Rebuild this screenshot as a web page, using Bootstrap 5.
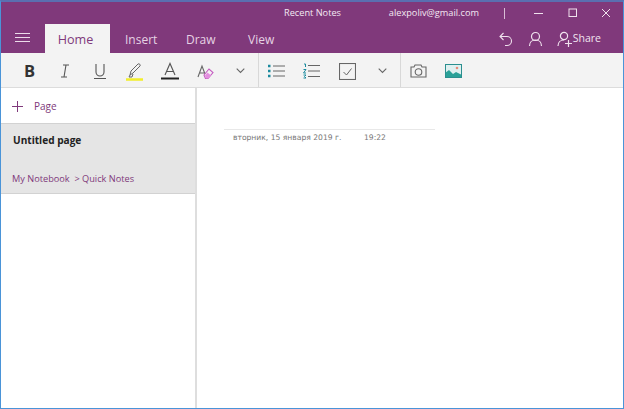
<!DOCTYPE html>
<html lang="en">
<head>
  <meta charset="UTF-8">
  <title>Recent Notes</title>
  <meta name="viewport" content="width=device-width, initial-scale=1">
  <link href="https://cdn.jsdelivr.net/npm/bootstrap@5.3.0/dist/css/bootstrap.min.css" rel="stylesheet">
  <style>
    html, body { height: 100%; overflow: hidden; }
    body { font-family: "Open Sans", "Noto Sans", sans-serif; background: #fff; }
    .app-window { width: 624px; height: 409px; border: 1px solid #4a94d8; border-top-color: #5a6fb0; border-top-width: 2px; }
    .app-head { background: #80397b; color: #fff; height: 51px; flex: none; }
    .title-row { height: 22px; font-size: 9.2px; color: #f4e9f3; }
    .title-name { margin-left: 283px; width: 105px; }
    .title-mail { width: 115px; }
    .title-bar-line { width: 1px; height: 11px; background: #d9bdd6; margin-right: 18px; }
    .win-btn { width: 33.5px; display: flex; justify-content: center; }
    .tab-row { height: 29px; }
    .menu-btn { width: 44px; padding-left: 14px; padding-top: 8px; }
    .menu-btn svg { display: block; }
    .tab-home { width: 65px; height: 29px; padding-right: 4px; background: #f3f3f3; color: #80397b; font-size: 12.6px; line-height: 31px; text-align: center; }
    .tab-other { color: #e6d3e4; font-size: 12px; line-height: 31px; }
    .tab-insert { margin-left: 15px; width: 61px; }
    .tab-draw { width: 62px; }
    .tab-view { width: 50px; }
    .tab-right { margin-left: auto; margin-right: 22px; column-gap: 14px; }
    .tab-right svg { display: block; }
    .share-txt { font-size: 10.5px; color: #f1e4ef; margin-left: 1px; }
    .tool-row { height: 35px; background: #f3f3f3; border-bottom: 1px solid #dcdcdc; padding-left: 11px; flex: none; }
    .tool-btn { width: 35.2px; height: 34px; padding-top: 2px; display: flex; align-items: center; justify-content: center; }
    .tool-sep { width: 1px; height: 34px; background: #d8d8d8; }
    .tool-bold { font-weight: 700; font-size: 16.5px; color: #333; }
    .side-pane { width: 196px; border-right: 2px solid #dedede; flex: none; }
    .add-page { height: 35px; padding-top: 1px; color: #80397b; font-size: 10px; padding-left: 11px; }
    .add-page span { margin-left: 11px; }
    .page-item { height: 71px; background: #e5e5e5; border-top: 1px solid #d2d2d2; border-bottom: 1px solid #d2d2d2; padding: 8px 11px 0 12px; }
    .page-name { font-size: 10.1px; font-weight: 700; color: #222; line-height: 16px; }
    .page-path { font-size: 9.2px; color: #80397b; margin-top: 24px; margin-left: -1px; line-height: 14px; white-space: nowrap; }
    .note-pane { padding: 41px 0 0 27px; }
    .note-head { width: 211px; border-top: 1px solid #e8e8e8; padding: 2px 0 0 9px; font-family: "DejaVu Sans", sans-serif; font-size: 7.6px; color: #777; line-height: 12px; }
    .note-date { width: 131px; }
  </style>
</head>
<body>
  <div class="app-window d-flex flex-column">
    <div class="app-head">
      <div class="title-row d-flex align-items-center">
        <div class="title-name">Recent Notes</div>
        <div class="title-mail">alexpoliv@gmail.com</div>
        <div class="title-bar-line"></div>
        <div class="win-btn"><svg width="10" height="10"><path d="M0 5.5h9" stroke="#f0e2ee"/></svg></div>
        <div class="win-btn"><svg width="10" height="10"><rect x="1" y="1" width="7.5" height="7.5" fill="none" stroke="#f0e2ee"/></svg></div>
        <div class="win-btn"><svg width="10" height="10"><path d="M1 1l8 8M9 1l-8 8" stroke="#f0e2ee"/></svg></div>
      </div>
      <div class="tab-row d-flex">
        <div class="menu-btn"><svg width="16" height="11"><path d="M0 1.5h15M0 5.5h15M0 9.5h15" stroke="#ecdcea" stroke-width="1.2"/></svg></div>
        <div class="tab-home">Home</div>
        <div class="tab-other tab-insert">Insert</div>
        <div class="tab-other tab-draw">Draw</div>
        <div class="tab-other tab-view">View</div>
        <div class="tab-right d-flex align-items-center">
          <svg width="16" height="16" viewBox="0 0 16 16" fill="none" stroke="#f0e2ee" stroke-width="1.1"><path d="M5.5 2L2 5.5 5.5 9M2 5.5h7a4.5 4.5 0 0 1 0 9H7"/></svg>
          <svg width="15" height="16" viewBox="0 0 15 16" fill="none" stroke="#f0e2ee" stroke-width="1.2"><circle cx="7.5" cy="5.5" r="4"/><path d="M1.5 15c0-3.5 2.5-6 6-6s6 2.5 6 6"/></svg>
          <div class="d-flex align-items-center">
            <svg width="15" height="16" viewBox="0 0 15 16" fill="none" stroke="#f0e2ee" stroke-width="1.2"><circle cx="7" cy="5" r="3.6"/><path d="M1 15c0-3.5 2.5-6 6-6M8 12.5h7M11.5 9v7"/></svg>
            <span class="share-txt">Share</span>
          </div>
        </div>
      </div>
    </div>
    <div class="tool-row d-flex">
      <div class="tool-btn tool-bold">B</div>
      <div class="tool-btn"><svg width="12" height="16" viewBox="0 0 12 16" fill="none" stroke="#555" stroke-width="1.1"><path d="M4 2h6M2 14h6M7 2L5 14"/></svg></div>
      <div class="tool-btn"><svg width="14" height="18" viewBox="0 0 14 18" fill="none" stroke="#555" stroke-width="1.1"><path d="M3 2v8a4 4 0 0 0 8 0V2M1 16.5h12"/></svg></div>
      <div class="tool-btn"><svg width="18" height="19" viewBox="0 0 18 19" fill="none"><path d="M4 13l1-4 7-7c1-1 3 1 2 2l-7 7zM4 13l-1 2h3l1-3" stroke="#666"/><path d="M0 17.5h17" stroke="#f2ee2a" stroke-width="2.5"/></svg></div>
      <div class="tool-btn"><svg width="18" height="18" viewBox="0 0 18 18" fill="none"><path d="M4 13L9 1.5 14 13M5.7 9.5h6.6" stroke="#555" stroke-width="1.1"/><path d="M0 16.5h18" stroke="#222" stroke-width="2"/></svg></div>
      <div class="tool-btn"><svg width="17" height="17" viewBox="0 0 17 17" fill="none"><path d="M1 14L5 3l3 8M2.5 10h5" stroke="#666" stroke-width="1.1"/><path d="M7 12l5-6 4 3.5-5 6H8.5z" stroke="#c45cc0" stroke-width="1.1"/><path d="M8 12.5l2.5-3 3.5 3-2.5 3H9z" fill="#e48ee0"/></svg></div>
      <div class="tool-btn"><svg width="9" height="6" viewBox="0 0 9 6" fill="none"><path d="M.7.7l3.8 3.8L8.3.7" stroke="#666" stroke-width="1.1"/></svg></div>
      <div class="tool-sep"></div>
      <div class="tool-btn"><svg width="18" height="14" viewBox="0 0 18 14" fill="none"><path d="M5 2h12M5 7h12M5 12h12" stroke="#666"/><path d="M0 2h2.5M0 7h2.5M0 12h2.5" stroke="#1b8a9e" stroke-width="2.5"/></svg></div>
      <div class="tool-btn"><svg width="18" height="16" viewBox="0 0 18 16" fill="none"><path d="M5 2.5h12M5 8h12M5 13.5h12" stroke="#666"/><path d="M1 1h1.5v3M.5 6.5h2.5L.5 10H3M.5 12H3L1.5 13.5 3 15H.5" stroke="#1b8a9e"/></svg></div>
      <div class="tool-btn"><svg width="17" height="17" viewBox="0 0 17 17" fill="none"><rect x=".5" y=".5" width="16" height="16" stroke="#666" stroke-width="1.1"/><path d="M4.5 9l3 3 5-6.5" stroke="#666"/></svg></div>
      <div class="tool-btn"><svg width="9" height="6" viewBox="0 0 9 6" fill="none"><path d="M.7.7l3.8 3.8L8.3.7" stroke="#666" stroke-width="1.1"/></svg></div>
      <div class="tool-sep"></div>
      <div class="tool-btn"><svg width="17" height="14" viewBox="0 0 17 14" fill="none" stroke="#666" stroke-width="1.1"><path d="M1 3h3l1-2h6l1 2h4v10H1z"/><circle cx="8.5" cy="8" r="3.3"/></svg></div>
      <div class="tool-btn"><svg width="17" height="14" viewBox="0 0 17 14"><rect width="17" height="14" fill="#dff0f0"/><path d="M0 14V9l4-3 4 4 3-2 6 3v3z" fill="#2aa198"/><circle cx="12" cy="4" r="1.3" fill="#e98a78"/><rect x=".5" y=".5" width="16" height="13" fill="none" stroke="#2b8f8f"/></svg></div>
    </div>
    <div class="d-flex flex-grow-1">
      <div class="side-pane">
        <div class="add-page d-flex align-items-center">
          <svg width="11" height="11"><path d="M5.5 0v11M0 5.5h11" stroke="#80397b"/></svg>
          <span>Page</span>
        </div>
        <div class="page-item">
          <div class="page-name">Untitled page</div>
          <div class="page-path">My Notebook &nbsp;&gt; Quick Notes</div>
        </div>
      </div>
      <div class="note-pane flex-grow-1">
        <div class="note-head d-flex">
          <div class="note-date">вторник, 15 января 2019 г.</div>
          <div>19:22</div>
        </div>
      </div>
    </div>
  </div>
  <script src="https://cdn.jsdelivr.net/npm/bootstrap@5.3.0/dist/js/bootstrap.bundle.min.js"></script>
</body>
</html>
